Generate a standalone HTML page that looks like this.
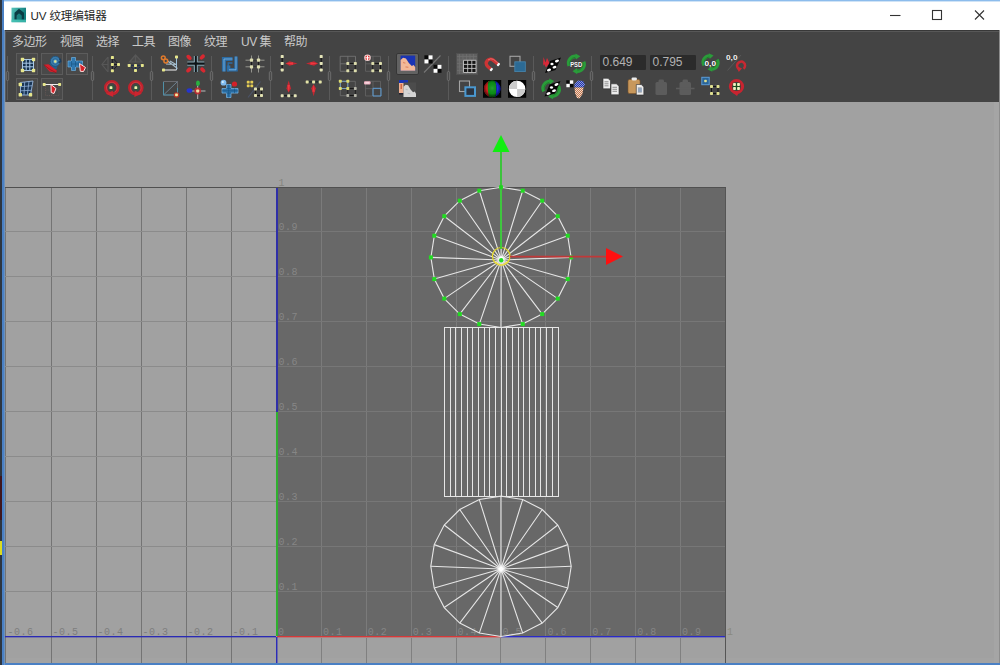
<!DOCTYPE html>
<html lang="zh-CN"><head><meta charset="utf-8"><title>UV 纹理编辑器</title>
<style>
html,body{margin:0;padding:0;}
body{width:1000px;height:665px;overflow:hidden;position:relative;background:#2e3640;font-family:"Liberation Sans","Noto Sans CJK SC",sans-serif;}
#frame{position:absolute;left:2px;top:0;width:998px;height:665px;background:#4a80c4;}
#lb{position:absolute;left:4px;top:0;width:1px;height:665px;background:#6e92bc;}
#title{position:absolute;left:4px;top:0;width:996px;height:30px;background:#fff;border-top:1px solid #8cbcec;box-sizing:border-box}
#title:before{content:"";position:absolute;left:0;top:0;width:100%;height:1px;background:#cfe3f6}
#title .t{position:absolute;left:26.5px;top:7px;font-size:11.6px;line-height:16px;color:#262626;white-space:nowrap;letter-spacing:-0.15px}
#tool{position:absolute;left:5px;top:30px;width:994px;height:72px;background:#444444;border-top:1px solid #383838;box-sizing:border-box}
#tool:before{content:"";position:absolute;left:0;top:0;width:100%;height:1px;background:#575757}
#tool:after{content:"";position:absolute;left:0;top:0;width:1px;height:100%;background:#5c5c5c}
#menu{position:absolute;left:0;top:0;height:22px;font-size:12px;color:#cacaca;white-space:nowrap;letter-spacing:-0.5px}
#menu span{position:absolute;top:2.5px;line-height:16px}
.num{position:absolute;top:55px;height:15px;width:46px;background:#2b2b2b;color:#b2b2b2;font-size:12px;line-height:15px;text-indent:2.5px;border-radius:1px}
.ls{position:absolute;left:0;width:3px}
</style></head><body>
<div class="ls" style="top:476px;height:44px;background:#40161c"></div>
<div class="ls" style="top:541px;height:14px;background:#dcdc20;width:3px"></div>
<div id="frame"></div><div id="lb"></div>
<div id="title">
<svg width="16" height="16" viewBox="0 0 16 16" style="position:absolute;left:6.500px;top:5.800px">
<defs><linearGradient id="lg" x1="0" y1="0" x2="1" y2=".3"><stop offset="0" stop-color="#56c4ba"/><stop offset="1" stop-color="#0f7c7c"/></linearGradient></defs>
<rect x=".5" y=".7" width="14.500" height="14.500" fill="url(#lg)"/>
<path d="M3.500 12.500 V5.800 L8 1.800 L13 5.800 V12.500 H10.500 V8.500 L8 6.500 L5.800 8.500 V12.500 Z" fill="#0a3c44"/>
<path d="M8 6.500 L10.500 8.500 V12.500 H5.800 V8.500Z" fill="#157878" opacity=".8"/>
<rect x=".5" y="12.700" width="14.500" height="2.500" fill="#48c8b8" opacity=".7"/>
</svg>
<div class="t">UV 纹理编辑器</div>
<svg width="120" height="28" viewBox="0 0 120 28" style="position:absolute;left:876px;top:0px">
<g stroke="#333" stroke-width="1.1" fill="none">
<line x1="10" y1="14.5" x2="20.5" y2="14.5"/>
<rect x="52.5" y="9.5" width="9" height="9"/>
<path d="M95 9.5 L104 18.5 M104 9.5 L95 18.5"/>
</g></svg>
</div>
<div id="tool">
<div id="menu">
<span style="left:7px">多边形</span><span style="left:55px">视图</span><span style="left:91px">选择</span><span style="left:127px">工具</span><span style="left:163px">图像</span><span style="left:199px">纹理</span><span style="left:236px">UV 集</span><span style="left:279px">帮助</span>
</div>
</div>
<div class="num" style="left:600px">0.649</div>
<div class="num" style="left:650px">0.795</div>
<svg id="cv" width="1000" height="665" viewBox="0 0 1000 665" style="position:absolute;left:0;top:0">
<rect x="5" y="102" width="994" height="561" fill="#a1a1a1"/>
<rect x="994" y="102" width="5" height="561" fill="#a5a5a5"/>
<rect x="5" y="658" width="994" height="5" fill="#a5a5a5" opacity=".6"/>
<rect x="999" y="30" width="1" height="633" fill="#8c8c8c"/>
<rect x="277" y="188" width="448" height="448" fill="#686868"/>
<g shape-rendering="crispEdges" stroke-width="1">
<line x1="5.5" y1="188" x2="5.5" y2="663" stroke="#747474"/>
<line x1="51.5" y1="188" x2="51.5" y2="663" stroke="#747474"/>
<line x1="96.5" y1="188" x2="96.5" y2="663" stroke="#747474"/>
<line x1="141.5" y1="188" x2="141.5" y2="663" stroke="#747474"/>
<line x1="186.5" y1="188" x2="186.5" y2="663" stroke="#747474"/>
<line x1="231.5" y1="188" x2="231.5" y2="663" stroke="#747474"/>
<line x1="321.5" y1="188" x2="321.5" y2="636" stroke="#7b7b7b"/>
<line x1="321.5" y1="638" x2="321.5" y2="663" stroke="#808080"/>
<line x1="366.5" y1="188" x2="366.5" y2="636" stroke="#7b7b7b"/>
<line x1="366.5" y1="638" x2="366.5" y2="663" stroke="#808080"/>
<line x1="411.5" y1="188" x2="411.5" y2="636" stroke="#7b7b7b"/>
<line x1="411.5" y1="638" x2="411.5" y2="663" stroke="#808080"/>
<line x1="456.5" y1="188" x2="456.5" y2="636" stroke="#7b7b7b"/>
<line x1="456.5" y1="638" x2="456.5" y2="663" stroke="#808080"/>
<line x1="500.5" y1="188" x2="500.5" y2="636" stroke="#7b7b7b"/>
<line x1="500.5" y1="638" x2="500.5" y2="663" stroke="#808080"/>
<line x1="545.5" y1="188" x2="545.5" y2="636" stroke="#7b7b7b"/>
<line x1="545.5" y1="638" x2="545.5" y2="663" stroke="#808080"/>
<line x1="590.5" y1="188" x2="590.5" y2="636" stroke="#7b7b7b"/>
<line x1="590.5" y1="638" x2="590.5" y2="663" stroke="#808080"/>
<line x1="635.5" y1="188" x2="635.5" y2="636" stroke="#7b7b7b"/>
<line x1="635.5" y1="638" x2="635.5" y2="663" stroke="#808080"/>
<line x1="680.5" y1="188" x2="680.5" y2="636" stroke="#7b7b7b"/>
<line x1="680.5" y1="638" x2="680.5" y2="663" stroke="#808080"/>
<line x1="725.5" y1="188" x2="725.5" y2="663" stroke="#555555"/>
<line x1="5" y1="591.5" x2="276" y2="591.5" stroke="#8b8b8b"/>
<line x1="278" y1="591.5" x2="725" y2="591.5" stroke="#777777"/>
<line x1="5" y1="546.5" x2="276" y2="546.5" stroke="#8b8b8b"/>
<line x1="278" y1="546.5" x2="725" y2="546.5" stroke="#777777"/>
<line x1="5" y1="501.5" x2="276" y2="501.5" stroke="#8b8b8b"/>
<line x1="278" y1="501.5" x2="725" y2="501.5" stroke="#777777"/>
<line x1="5" y1="456.5" x2="276" y2="456.5" stroke="#8b8b8b"/>
<line x1="278" y1="456.5" x2="725" y2="456.5" stroke="#777777"/>
<line x1="5" y1="411.5" x2="276" y2="411.5" stroke="#8b8b8b"/>
<line x1="278" y1="411.5" x2="725" y2="411.5" stroke="#777777"/>
<line x1="5" y1="366.5" x2="276" y2="366.5" stroke="#8b8b8b"/>
<line x1="278" y1="366.5" x2="725" y2="366.5" stroke="#777777"/>
<line x1="5" y1="321.5" x2="276" y2="321.5" stroke="#8b8b8b"/>
<line x1="278" y1="321.5" x2="725" y2="321.5" stroke="#777777"/>
<line x1="5" y1="276.5" x2="276" y2="276.5" stroke="#8b8b8b"/>
<line x1="278" y1="276.5" x2="725" y2="276.5" stroke="#777777"/>
<line x1="5" y1="231.5" x2="276" y2="231.5" stroke="#8b8b8b"/>
<line x1="278" y1="231.5" x2="725" y2="231.5" stroke="#777777"/>
<line x1="5" y1="187.5" x2="726" y2="187.5" stroke="#505050"/>
</g>
<g shape-rendering="crispEdges">
<rect x="5" y="636" width="271" height="1" fill="#2a2ab4"/><rect x="5" y="637" width="271" height="1" fill="#2a2ab4" opacity=".35"/>
<rect x="277" y="636" width="224" height="1" fill="#d83838"/><rect x="277" y="637" width="224" height="1" fill="#d83838" opacity=".35"/>
<rect x="501" y="636" width="224" height="1" fill="#2a2ac8"/><rect x="501" y="637" width="224" height="1" fill="#2a2ac8" opacity=".35"/>
<rect x="276" y="188" width="2" height="224" fill="#3030a8"/>
<rect x="276" y="412" width="2" height="224" fill="#2fb02f"/>
<rect x="276" y="637" width="1" height="26" fill="#2c2cb8"/><rect x="277" y="637" width="1" height="26" fill="#2c2cb8" opacity=".45"/>
</g>
<g font-family="'Liberation Mono', monospace" font-size="10" letter-spacing="0.5">
<text x="7.5" y="635" fill="#7e7e7e">-0.6</text>
<text x="52.5" y="635" fill="#7e7e7e">-0.5</text>
<text x="97.5" y="635" fill="#7e7e7e">-0.4</text>
<text x="142.5" y="635" fill="#7e7e7e">-0.3</text>
<text x="187.5" y="635" fill="#7e7e7e">-0.2</text>
<text x="232.5" y="635" fill="#7e7e7e">-0.1</text>
<text x="278.0" y="635" fill="#858585">0</text>
<text x="322.9" y="635" fill="#858585">0.1</text>
<text x="367.8" y="635" fill="#858585">0.2</text>
<text x="412.7" y="635" fill="#858585">0.3</text>
<text x="457.6" y="635" fill="#858585">0.4</text>
<text x="502.5" y="635" fill="#858585">0.5</text>
<text x="547.4" y="635" fill="#858585">0.6</text>
<text x="592.3" y="635" fill="#858585">0.7</text>
<text x="637.2" y="635" fill="#858585">0.8</text>
<text x="682.1" y="635" fill="#858585">0.9</text>
<text x="727.0" y="635" fill="#8a8a80">1</text>
<text x="278.5" y="590.0" fill="#868686">0.1</text>
<text x="278.5" y="545.1" fill="#868686">0.2</text>
<text x="278.5" y="500.1" fill="#868686">0.3</text>
<text x="278.5" y="455.2" fill="#868686">0.4</text>
<text x="278.5" y="410.2" fill="#868686">0.5</text>
<text x="278.5" y="365.3" fill="#868686">0.6</text>
<text x="278.5" y="320.3" fill="#868686">0.7</text>
<text x="278.5" y="275.4" fill="#868686">0.8</text>
<text x="278.5" y="230.4" fill="#868686">0.9</text>
<text x="278.5" y="185.5" fill="#858580">1</text>
</g>
<g shape-rendering="crispEdges" stroke="#e6e6e6" stroke-width="1">
<line x1="444.5" y1="327" x2="444.5" y2="496"/>
<line x1="450.5" y1="327" x2="450.5" y2="496"/>
<line x1="455.5" y1="327" x2="455.5" y2="496"/>
<line x1="461.5" y1="327" x2="461.5" y2="496"/>
<line x1="467.5" y1="327" x2="467.5" y2="496"/>
<line x1="472.5" y1="327" x2="472.5" y2="496"/>
<line x1="478.5" y1="327" x2="478.5" y2="496"/>
<line x1="484.5" y1="327" x2="484.5" y2="496"/>
<line x1="489.5" y1="327" x2="489.5" y2="496"/>
<line x1="495.5" y1="327" x2="495.5" y2="496"/>
<line x1="501.5" y1="327" x2="501.5" y2="496"/>
<line x1="506.5" y1="327" x2="506.5" y2="496"/>
<line x1="512.5" y1="327" x2="512.5" y2="496"/>
<line x1="518.5" y1="327" x2="518.5" y2="496"/>
<line x1="523.5" y1="327" x2="523.5" y2="496"/>
<line x1="529.5" y1="327" x2="529.5" y2="496"/>
<line x1="535.5" y1="327" x2="535.5" y2="496"/>
<line x1="540.5" y1="327" x2="540.5" y2="496"/>
<line x1="546.5" y1="327" x2="546.5" y2="496"/>
<line x1="552.5" y1="327" x2="552.5" y2="496"/>
<line x1="558.5" y1="327" x2="558.5" y2="496"/>
<line x1="444.0" y1="327.5" x2="558.5" y2="327.5"/>
<line x1="444.0" y1="496.5" x2="558.5" y2="496.5"/>
</g>
<path d="M571.20 566.30 L567.76 544.61 L557.79 525.04 L542.26 509.51 L522.69 499.54 L501.00 496.10 L479.31 499.54 L459.74 509.51 L444.21 525.04 L434.24 544.61 L430.80 566.30 L434.24 587.99 L444.21 607.56 L459.74 623.09 L479.31 633.06 L501.00 636.50 L522.69 633.06 L542.26 623.09 L557.79 607.56 L567.76 587.99 Z" fill="none" stroke="#e6e6e6" stroke-width="1.1"/>
<path d="M501 569 L571.20 566.30 M501 569 L567.76 544.61 M501 569 L557.79 525.04 M501 569 L542.26 509.51 M501 569 L522.69 499.54 M501 569 L501.00 496.10 M501 569 L479.31 499.54 M501 569 L459.74 509.51 M501 569 L444.21 525.04 M501 569 L434.24 544.61 M501 569 L430.80 566.30 M501 569 L434.24 587.99 M501 569 L444.21 607.56 M501 569 L459.74 623.09 M501 569 L479.31 633.06 M501 569 L501.00 636.50 M501 569 L522.69 633.06 M501 569 L542.26 623.09 M501 569 L557.79 607.56 M501 569 L567.76 587.99 " fill="none" stroke="#e6e6e6" stroke-width="1.1"/>
<rect x="498.8" y="566.8" width="4.4" height="4.4" transform="rotate(45 501 569)" fill="#ffffff"/>
<path d="M571.10 257.40 L567.67 235.74 L557.71 216.20 L542.20 200.69 L522.66 190.73 L501.00 187.30 L479.34 190.73 L459.80 200.69 L444.29 216.20 L434.33 235.74 L430.90 257.40 L434.33 279.06 L444.29 298.60 L459.80 314.11 L479.34 324.07 L501.00 327.50 L522.66 324.07 L542.20 314.11 L557.71 298.60 L567.67 279.06 Z" fill="none" stroke="#e6e6e6" stroke-width="1.1"/>
<path d="M501.2 260 L571.10 257.40 M501.2 260 L567.67 235.74 M501.2 260 L557.71 216.20 M501.2 260 L542.20 200.69 M501.2 260 L522.66 190.73 M501.2 260 L501.00 187.30 M501.2 260 L479.34 190.73 M501.2 260 L459.80 200.69 M501.2 260 L444.29 216.20 M501.2 260 L434.33 235.74 M501.2 260 L430.90 257.40 M501.2 260 L434.33 279.06 M501.2 260 L444.29 298.60 M501.2 260 L459.80 314.11 M501.2 260 L479.34 324.07 M501.2 260 L501.00 327.50 M501.2 260 L522.66 324.07 M501.2 260 L542.20 314.11 M501.2 260 L557.71 298.60 M501.2 260 L567.67 279.06 " fill="none" stroke="#e6e6e6" stroke-width="1.1"/>
<rect x="569.1" y="255.4" width="4" height="4" fill="#22dd22"/>
<rect x="565.7" y="233.7" width="4" height="4" fill="#22dd22"/>
<rect x="555.7" y="214.2" width="4" height="4" fill="#22dd22"/>
<rect x="540.2" y="198.7" width="4" height="4" fill="#22dd22"/>
<rect x="520.7" y="188.7" width="4" height="4" fill="#22dd22"/>
<rect x="499.0" y="185.3" width="4" height="4" fill="#22dd22"/>
<rect x="477.3" y="188.7" width="4" height="4" fill="#22dd22"/>
<rect x="457.8" y="198.7" width="4" height="4" fill="#22dd22"/>
<rect x="442.3" y="214.2" width="4" height="4" fill="#22dd22"/>
<rect x="432.3" y="233.7" width="4" height="4" fill="#22dd22"/>
<rect x="428.9" y="255.4" width="4" height="4" fill="#22dd22"/>
<rect x="432.3" y="277.1" width="4" height="4" fill="#22dd22"/>
<rect x="442.3" y="296.6" width="4" height="4" fill="#22dd22"/>
<rect x="457.8" y="312.1" width="4" height="4" fill="#22dd22"/>
<rect x="477.3" y="322.1" width="4" height="4" fill="#22dd22"/>
<rect x="520.7" y="322.1" width="4" height="4" fill="#22dd22"/>
<rect x="540.2" y="312.1" width="4" height="4" fill="#22dd22"/>
<rect x="555.7" y="296.6" width="4" height="4" fill="#22dd22"/>
<rect x="565.7" y="277.1" width="4" height="4" fill="#22dd22"/>
<circle cx="501.2" cy="256.3" r="8.800" fill="none" stroke="#e8dc28" stroke-width="1.200"/>
<line x1="501" y1="249" x2="501" y2="152" stroke="#22cc22" stroke-width="1.600"/>
<polygon points="501,135 492.5,152 509.5,152" fill="#11ee11"/>
<line x1="510" y1="256.700" x2="607" y2="256.700" stroke="#c03838" stroke-width="1.700"/>
<polygon points="623,256.5 606,248 606,265" fill="#ff1010"/>
<circle cx="501.200" cy="259" r="2.600" fill="#ffffff"/><circle cx="501.200" cy="260.200" r="2.200" fill="#22dd22"/><path d="M495.500 262 Q501 268 507 262" stroke="#f0e050" stroke-width="1.500" fill="none" opacity=".8"/>
</svg>
<svg id="ic" width="1000" height="110" viewBox="0 0 1000 110" style="position:absolute;left:0;top:0">
<defs>
<radialGradient id="rgS" cx=".5" cy=".45" r=".55"><stop offset="0" stop-color="#fff" stop-opacity=".12"/><stop offset=".6" stop-color="#000" stop-opacity=".05"/><stop offset="1" stop-color="#000" stop-opacity=".7"/></radialGradient>
</defs>
<line x1="7.5" y1="56" x2="7.5" y2="100" stroke="#5a5a5a" stroke-width="1"/>
<rect x="6.3" y="71.5" width="2.4" height="9" rx="1.2" fill="#4a4a4a" stroke="#7c7c7c" stroke-width=".7"/>
<line x1="92.5" y1="56" x2="92.5" y2="100" stroke="#5a5a5a" stroke-width="1"/>
<rect x="91.3" y="71.5" width="2.4" height="9" rx="1.2" fill="#4a4a4a" stroke="#7c7c7c" stroke-width=".7"/>
<line x1="151.5" y1="56" x2="151.5" y2="100" stroke="#5a5a5a" stroke-width="1"/>
<rect x="150.3" y="71.5" width="2.4" height="9" rx="1.2" fill="#4a4a4a" stroke="#7c7c7c" stroke-width=".7"/>
<line x1="211.5" y1="56" x2="211.5" y2="100" stroke="#5a5a5a" stroke-width="1"/>
<rect x="210.3" y="71.5" width="2.4" height="9" rx="1.2" fill="#4a4a4a" stroke="#7c7c7c" stroke-width=".7"/>
<line x1="270.5" y1="56" x2="270.5" y2="100" stroke="#5a5a5a" stroke-width="1"/>
<rect x="269.3" y="71.5" width="2.4" height="9" rx="1.2" fill="#4a4a4a" stroke="#7c7c7c" stroke-width=".7"/>
<line x1="329.5" y1="56" x2="329.5" y2="100" stroke="#5a5a5a" stroke-width="1"/>
<rect x="328.3" y="71.5" width="2.4" height="9" rx="1.2" fill="#4a4a4a" stroke="#7c7c7c" stroke-width=".7"/>
<line x1="388.5" y1="56" x2="388.5" y2="100" stroke="#5a5a5a" stroke-width="1"/>
<rect x="387.3" y="71.5" width="2.4" height="9" rx="1.2" fill="#4a4a4a" stroke="#7c7c7c" stroke-width=".7"/>
<line x1="448.5" y1="56" x2="448.5" y2="100" stroke="#5a5a5a" stroke-width="1"/>
<rect x="447.3" y="71.5" width="2.4" height="9" rx="1.2" fill="#4a4a4a" stroke="#7c7c7c" stroke-width=".7"/>
<line x1="533.5" y1="56" x2="533.5" y2="100" stroke="#5a5a5a" stroke-width="1"/>
<rect x="532.3" y="71.5" width="2.4" height="9" rx="1.2" fill="#4a4a4a" stroke="#7c7c7c" stroke-width=".7"/>
<line x1="591.5" y1="56" x2="591.5" y2="100" stroke="#5a5a5a" stroke-width="1"/>
<rect x="590.3" y="71.5" width="2.4" height="9" rx="1.2" fill="#4a4a4a" stroke="#7c7c7c" stroke-width=".7"/>
<rect x="16.5" y="53.5" width="21" height="21" fill="#494949" stroke="#5c5c5c" stroke-width="1"/>
<rect x="41.5" y="53.5" width="21" height="21" fill="#494949" stroke="#5c5c5c" stroke-width="1"/>
<rect x="66.5" y="53.5" width="21" height="21" fill="#494949" stroke="#5c5c5c" stroke-width="1"/>
<rect x="16.5" y="78.5" width="21" height="21" fill="#494949" stroke="#5c5c5c" stroke-width="1"/>
<rect x="41.5" y="78.5" width="21" height="21" fill="#494949" stroke="#5c5c5c" stroke-width="1"/>
<rect x="22" y="59" width="12" height="12" fill="#14304c"/>
<path d="M22.5 59.5H33.5V70.5H22.5Z M26.2 59.5V70.5 M29.8 59.5V70.5 M22.5 63.2H33.5 M22.5 66.8H33.5" stroke="#a8c8e6" stroke-width="1" fill="none"/>
<rect x="20.8" y="57.8" width="3.4" height="3.4" rx=".7" fill="#e6e68c"/>
<rect x="31.8" y="57.8" width="3.4" height="3.4" rx=".7" fill="#e6e68c"/>
<rect x="20.8" y="68.8" width="3.4" height="3.4" rx=".7" fill="#e6e68c"/>
<rect x="31.8" y="68.8" width="3.4" height="3.4" rx=".7" fill="#e6e68c"/>
<path d="M49.500 63.500 L52 60 L58 64 L56.500 69.500 L53 69 Z" fill="#2a5f8c"/>
<circle cx="55.300" cy="61.300" r="5" fill="#3a7cac" stroke="#1f527c" stroke-width=".8"/>
<path d="M59.500 58.500 A5 5 0 0 1 60.800 61.500 L58.500 62.500" fill="none" stroke="#1c3c5c" stroke-width="1.400"/>
<circle cx="55.300" cy="61.500" r="2.700" fill="#4c94c4" stroke="#1c4c74" stroke-width=".6"/>
<rect x="54.1" y="60.3" width="2.4" height="2.4" rx=".7" fill="#e6e68c"/>
<path d="M43.700 64.700 L48.500 64.200 L56.800 70.500 L56.300 72.800 L49.500 71.500 Z" fill="#d4202c"/>
<path d="M43.700 64.700 L50 69.500 L56.300 72.800" stroke="#7c1018" stroke-width=".6" fill="none"/>
<path d="M71 57.5h4v3.5h7v6h-7v3.5h-4v-3.5h-3.5v-6h3.5z" transform="translate(0.5,0)" fill="#2f78b0" stroke="#6fb0e0" stroke-width=".7"/>
<path d="M71.5 61v6 M75.5 61v6 M79 61v6 M71.5 64h11" stroke="#14507e" stroke-width=".6" fill="none"/>
<path d="M79.5 63.5 L85.5 67.5 L83.5 71.5 L80.3 71.3 Z" fill="#d42028" stroke="#ffe0e0" stroke-width="1"/>
<path d="M20.5 82.5 L33 81 L30.5 95 L20.5 95 Z" fill="#1a3656" stroke="#9ab8dc" stroke-width=".9"/>
<path d="M24.7 82 L24 95 M29 81.5 L27.3 95 M20.5 86.7 L32.2 85.7 M20.5 90.8 L31.4 90.3" stroke="#8fb0d8" stroke-width=".8" fill="none"/>
<rect x="18.6" y="82.8" width="3.4" height="3.4" rx=".7" fill="#e6e68c"/>
<rect x="18.6" y="93.0" width="3.4" height="3.4" rx=".7" fill="#e6e68c"/>
<rect x="28.8" y="93.0" width="3.4" height="3.4" rx=".7" fill="#e6e68c"/>
<path d="M45.5 85 H59 V95.5 H45.5 Z M45.5 90 H59 M52 85 V95.5" stroke="#6a5a58" stroke-width=".7" fill="none" stroke-dasharray="1.2 1"/>
<line x1="44" y1="84.5" x2="60" y2="84.5" stroke="#f0f0f0" stroke-width="1"/>
<rect x="42.7" y="83.0" width="3.0" height="3.0" rx=".7" fill="#e6e68c"/>
<rect x="58.1" y="83.0" width="3.0" height="3.0" rx=".7" fill="#e6e68c"/>
<path d="M51 84.5 L56 88.5 L54 93.5 L51.2 92.5 Z" fill="#d42028" stroke="#ffe4e4" stroke-width="1"/>
<path d="M108 57 L102 64.5 L108 72 M108 57 V72 M102 64.5 H108" stroke="#686868" stroke-width="1.2" fill="none" opacity=".55"/>
<path d="M112.4 57.6 V70.8 M112.4 64.5 H118.5 M112.4 57.6 L118.5 64.5 L112.4 70.8" stroke="#1c1c24" stroke-width="1" fill="none"/>
<rect x="110.9" y="56.1" width="3.0" height="3.0" rx=".7" fill="#e6e68c"/>
<rect x="110.9" y="63.0" width="3.0" height="3.0" rx=".7" fill="#e6e68c"/>
<rect x="110.9" y="69.3" width="3.0" height="3.0" rx=".7" fill="#e6e68c"/>
<rect x="117.0" y="63.0" width="3.0" height="3.0" rx=".7" fill="#e6e68c"/>
<path d="M129.5 62 L135.5 55 L142 62 Z M135.500 55 V62" stroke="#646464" stroke-width="1.2" fill="#4e4e4e" opacity=".6"/>
<path d="M129.2 65.4 H142.3 M135.5 65.4 V70.5 M129.2 65.4 L135.5 70.5 L142.3 65.4" stroke="#1c2c50" stroke-width="1" fill="none"/>
<rect x="127.7" y="63.9" width="3.0" height="3.0" rx=".7" fill="#e6e68c"/>
<rect x="134.0" y="63.9" width="3.0" height="3.0" rx=".7" fill="#e6e68c"/>
<rect x="140.8" y="63.9" width="3.0" height="3.0" rx=".7" fill="#e6e68c"/>
<rect x="134.0" y="69.0" width="3.0" height="3.0" rx=".7" fill="#e6e68c"/>
<g transform="translate(111.8,87.7)"><circle cx="0" cy="0" r="6.200" fill="none" stroke="#c0222c" stroke-width="3.200"/><path d="M-6 6 L1 3 L1.500 9.300 Z" fill="#cc2530"/><path d="M-4.500 3 A5.400 5.400 0 1 1 3 4.500" fill="none" stroke="#e85860" stroke-width=".7" opacity=".6"/></g>
<rect x="109.2" y="85.5" width="4.4" height="4.4" fill="#2c5c38"/>
<rect x="109.6" y="86.3" width="2.8" height="2.8" rx=".7" fill="#f0f0b0"/>
<g transform="translate(135.8,87.7) scale(-1,1)"><circle cx="0" cy="0" r="6.200" fill="none" stroke="#c0222c" stroke-width="3.200"/><path d="M-6 6 L1 3 L1.500 9.300 Z" fill="#cc2530"/><path d="M-4.500 3 A5.400 5.400 0 1 1 3 4.500" fill="none" stroke="#e85860" stroke-width=".7" opacity=".6"/></g>
<rect x="134.0" y="85.5" width="4.4" height="4.4" fill="#2c5c38"/>
<rect x="134.4" y="86.3" width="2.8" height="2.8" rx=".7" fill="#f0f0b0"/>
<path d="M176.5 57 V70" stroke="#9cc0dc" stroke-width="1" fill="none"/>
<path d="M163.5 70 H176.5" stroke="#e8e8e8" stroke-width="1.1" fill="none"/>
<path d="M167 60.5 L177.5 68.5 M166 64 L176 64.500 L170 61" stroke="#a8c0d0" stroke-width="1.1" fill="none"/>
<circle cx="163.3" cy="57.8" r="1.9" fill="none" stroke="#e07a2c" stroke-width="1.5"/><circle cx="165.800" cy="61" r="1.9" fill="none" stroke="#e07a2c" stroke-width="1.5"/>
<rect x="175.0" y="55.5" width="3.0" height="3.0" rx=".7" fill="#e6e68c"/>
<rect x="162.0" y="68.5" width="3.0" height="3.0" rx=".7" fill="#e6e68c"/>
<path d="M194.3 56v6h-7 M197.3 56v6h7 M194.3 72v-6.800h-7 M197.3 72v-6.800h7" stroke="#86aab8" stroke-width="1" fill="none"/>
<path d="M195.8 56V72 M187.500 63.600H204.5" stroke="#0c1418" stroke-width="1.6" fill="none"/>
<ellipse cx="189" cy="57.3" rx="3" ry="1.9" transform="rotate(45 189 57.3)" fill="#d82830"/>
<ellipse cx="202.3" cy="57" rx="3" ry="1.9" transform="rotate(135 202.3 57)" fill="#d82830"/>
<ellipse cx="188.8" cy="69.8" rx="3" ry="1.9" transform="rotate(-45 188.8 69.8)" fill="#d82830"/>
<ellipse cx="202.8" cy="70" rx="3" ry="1.9" transform="rotate(-135 202.8 70)" fill="#d82830"/>
<path d="M163.5 81.5 H177.5 V95 H163.5 Z" stroke="#6a6a70" stroke-width="1" fill="none"/>
<path d="M163.5 95 L177.5 81.5" stroke="#6c8090" stroke-width="1" fill="none"/>
<path d="M163.5 82 V95 H177 M177.500 88 V95" stroke="#4f90a8" stroke-width="1" fill="none"/>
<circle cx="176.5" cy="95" r="2.800" fill="#c83020" opacity=".85"/>
<rect x="175.1" y="93.4" width="2.8" height="2.8" rx=".7" fill="#f4e8a0"/>
<path d="M197.7 85 V99 M190 91 H205.5" stroke="#c8c8c8" stroke-width=".9"/>
<circle cx="197.7" cy="91" r="3.4" fill="#c02830" opacity=".9"/>
<ellipse cx="198" cy="83.300" rx="1.900" ry="2.800" fill="#28b040"/>
<ellipse cx="189.5" cy="90.5" rx="2.900" ry="2.300" fill="#2434d0"/>
<rect x="196.2" y="89.5" width="3.0" height="3.0" rx=".7" fill="#f0e0a0"/>
<path d="M224 71.5 V59 H232.500" stroke="#2c6ca4" stroke-width="4.2" fill="none"/>
<path d="M236 56.500 V69.800 H228.600 V65.5" stroke="#2c6ca4" stroke-width="3.600" fill="none"/>
<path d="M224 71.5 V59 H232.500 M236 56.500 V69.800 H228.600 V65.5" stroke="#86bce8" stroke-width=".8" fill="none"/>
<path d="M228.200 71.500 V63 H232.500" stroke="#2c6ca4" stroke-width="1.4" fill="none"/>
<path d="M251.5 55.5V72.5 M258.5 55.5V72.5 M245.500 60.2H264.500 M245.500 66.8H264.500" stroke="#b4b4ac" stroke-width=".9" opacity=".8"/>
<path d="M251.5 60.2H258.5V66.8H251.5Z" stroke="#181818" stroke-width="1" fill="none"/>
<rect x="249.9" y="58.6" width="3.2" height="3.2" rx=".7" fill="#dcdcb0"/>
<rect x="256.9" y="58.6" width="3.2" height="3.2" rx=".7" fill="#dcdcb0"/>
<rect x="249.9" y="65.2" width="3.2" height="3.2" rx=".7" fill="#dcdcb0"/>
<rect x="256.9" y="65.2" width="3.2" height="3.2" rx=".7" fill="#dcdcb0"/>
<path d="M226.500 84.500h4.500v4h7v4.600h-7v4.400h-4.500v-4.400h-4.500v-4.600h4.500z" fill="#2f74ac" stroke="#7ab8e6" stroke-width=".7"/>
<path d="M222 90.800h16 M228.700 84.500v13 M226.500 88.500h4.500 M226.500 93.100h4.500 M234.500 88.500v4.600" stroke="#16507e" stroke-width=".6" fill="none"/>
<circle cx="223.5" cy="82.700" r="2.900" fill="#80bcf0"/><circle cx="222.8" cy="82" r="1.1" fill="#dcf2ff"/>
<circle cx="234.5" cy="84" r="2.600" fill="#d42028"/>
<rect x="246.8" y="80.8" width="2.8" height="2.8" rx=".7" fill="#e4cc54"/>
<rect x="250.4" y="80.8" width="2.8" height="2.8" rx=".7" fill="#e4cc54"/>
<rect x="246.8" y="84.4" width="2.8" height="2.8" rx=".7" fill="#e4cc54"/>
<rect x="250.4" y="84.4" width="2.8" height="2.8" rx=".7" fill="#e4cc54"/>
<line x1="248" y1="97.5" x2="260.500" y2="81.500" stroke="#4c5468" stroke-width="1.1"/>
<path d="M255.5 89H261.500V95.500H255.5Z" stroke="#141414" stroke-width="1" fill="none"/>
<rect x="254.0" y="87.5" width="3.0" height="3.0" rx=".7" fill="#e0e0b0"/>
<rect x="260.0" y="87.5" width="3.0" height="3.0" rx=".7" fill="#e0e0b0"/>
<rect x="254.0" y="94.0" width="3.0" height="3.0" rx=".7" fill="#e0e0b0"/>
<rect x="260.0" y="94.0" width="3.0" height="3.0" rx=".7" fill="#e0e0b0"/>
<line x1="282.2" y1="56.600" x2="282.2" y2="70" stroke="#101010" stroke-width="1.1"/>
<rect x="280.7" y="55.1" width="3.0" height="3.0" rx=".7" fill="#e4e4b8"/>
<rect x="280.7" y="61.9" width="3.0" height="3.0" rx=".7" fill="#e4e4b8"/>
<rect x="280.7" y="68.5" width="3.0" height="3.0" rx=".7" fill="#e4e4b8"/>
<g transform="translate(290,63.5) rotate(180)"><path d="M-7.500 0 L0.500 -2.300 L4.500 0 L0.500 2.300 Z" fill="#c42832"/><path d="M-3 -1.200 L4.500 0 L-3 1.200 Z" fill="#ec3840"/></g>
<line x1="321.2" y1="56.600" x2="321.2" y2="70" stroke="#101010" stroke-width="1.1"/>
<rect x="319.7" y="55.1" width="3.0" height="3.0" rx=".7" fill="#e4e4b8"/>
<rect x="319.7" y="61.9" width="3.0" height="3.0" rx=".7" fill="#e4e4b8"/>
<rect x="319.7" y="68.5" width="3.0" height="3.0" rx=".7" fill="#e4e4b8"/>
<g transform="translate(313.5,63.5) rotate(0)"><path d="M-7.500 0 L0.500 -2.300 L4.500 0 L0.500 2.300 Z" fill="#c42832"/><path d="M-3 -1.200 L4.500 0 L-3 1.200 Z" fill="#ec3840"/></g>
<line x1="282.2" y1="95.7" x2="295.2" y2="95.7" stroke="#181c1c" stroke-width="1.1"/>
<rect x="280.7" y="94.2" width="3.0" height="3.0" rx=".7" fill="#e4e4b8"/>
<rect x="287.2" y="94.2" width="3.0" height="3.0" rx=".7" fill="#e4e4b8"/>
<rect x="293.7" y="94.2" width="3.0" height="3.0" rx=".7" fill="#e4e4b8"/>
<g transform="translate(288.7,88) rotate(90)"><path d="M-7.500 0 L0.500 -2.300 L4.500 0 L0.500 2.300 Z" fill="#c42832"/><path d="M-3 -1.200 L4.500 0 L-3 1.200 Z" fill="#ec3840"/></g>
<line x1="307.2" y1="81.9" x2="320.2" y2="81.9" stroke="#102828" stroke-width="1.1"/>
<rect x="305.7" y="80.4" width="3.0" height="3.0" rx=".7" fill="#e4e4a8"/>
<rect x="312.1" y="80.4" width="3.0" height="3.0" rx=".7" fill="#e4e4a8"/>
<rect x="318.7" y="80.4" width="3.0" height="3.0" rx=".7" fill="#e4e4a8"/>
<g transform="translate(313.6,88.8) rotate(-90)"><path d="M-7.500 0 L0.500 -2.300 L4.500 0 L0.500 2.300 Z" fill="#c42832"/><path d="M-3 -1.200 L4.500 0 L-3 1.200 Z" fill="#ec3840"/></g>
<path d="M340.2 56.3H355.5V71.3H340.2Z M347.84999999999997 56.3V71.3 M340.2 63.8H355.5" stroke="#787878" stroke-width=".8" fill="none"/>
<path d="M347.800 63.500H355.300V70.800H347.800Z" stroke="#141414" stroke-width="1" fill="none"/>
<rect x="346.3" y="62.0" width="3.0" height="3.0" rx=".7" fill="#dcdcac"/>
<rect x="353.8" y="62.0" width="3.0" height="3.0" rx=".7" fill="#dcdcac"/>
<rect x="346.3" y="69.3" width="3.0" height="3.0" rx=".7" fill="#dcdcac"/>
<rect x="353.8" y="69.3" width="3.0" height="3.0" rx=".7" fill="#dcdcac"/>
<path d="M365.5 56.3H380.5V71.3H365.5Z M373.0 56.3V71.3 M365.5 63.8H380.5" stroke="#646464" stroke-width=".8" fill="none"/>
<path d="M372.800 63.500H380.500V70.800H372.800Z" stroke="#141414" stroke-width="1" fill="none"/>
<rect x="371.3" y="62.0" width="3.0" height="3.0" rx=".7" fill="#dcdcac"/>
<rect x="379.0" y="62.0" width="3.0" height="3.0" rx=".7" fill="#dcdcac"/>
<rect x="371.3" y="69.3" width="3.0" height="3.0" rx=".7" fill="#dcdcac"/>
<rect x="379.0" y="69.3" width="3.0" height="3.0" rx=".7" fill="#dcdcac"/>
<circle cx="367.5" cy="57.8" r="3.300" fill="#f4d0d0"/><circle cx="367.5" cy="57.8" r="2.300" fill="#e03434"/><path d="M365.3 57.800h4.400M367.5 55.6v4.400" stroke="#fff" stroke-width="1"/>
<path d="M340.3 81.3H355.3V95.7H340.3Z M347.8 81.3V95.7 M340.3 88.5H355.3" stroke="#6e6e6e" stroke-width=".8" fill="none"/>
<path d="M340.3 81.300H347.800V88.500H340.3Z" stroke="#78a8c8" stroke-width=".9" fill="none"/>
<path d="M347.8 88.500H355.300V95.500H347.800Z" stroke="#161616" stroke-width="1" fill="none"/>
<rect x="338.8" y="79.8" width="3.0" height="3.0" rx=".7" fill="#dcdc70"/>
<rect x="346.3" y="79.8" width="3.0" height="3.0" rx=".7" fill="#dcdc70"/>
<rect x="338.8" y="87.0" width="3.0" height="3.0" rx=".7" fill="#dcdc70"/>
<rect x="346.3" y="87.0" width="3.0" height="3.0" rx=".7" fill="#dcdc70"/>
<rect x="353.9" y="87.1" width="2.8" height="2.8" rx=".7" fill="#b4b4a8"/>
<rect x="346.4" y="94.1" width="2.8" height="2.8" rx=".7" fill="#b4b4a8"/>
<rect x="353.9" y="94.1" width="2.8" height="2.8" rx=".7" fill="#b4b4a8"/>
<path d="M365.5 81.3H380.5V96.0H365.5Z M373.0 81.3V96.0 M365.5 88.64999999999999H380.5" stroke="#646464" stroke-width=".8" fill="none"/>
<path d="M373 88.300H381V96H373Z" stroke="#5c9cd4" stroke-width="1" fill="none"/>
<rect x="364" y="81.300" width="6.600" height="3.200" rx="1" fill="#f0b0c0"/><line x1="365.3" y1="82.900" x2="369.3" y2="82.900" stroke="#fff" stroke-width=".8"/>
<rect x="396.5" y="53.5" width="22" height="21" rx="1.5" fill="#626262" stroke="#363636" stroke-width="1"/>
<g transform="translate(400.6,55.6) scale(0.9733333333333333,0.9806451612903225)"><rect width="15" height="15.5" fill="#1a34b4"/><path d="M0 4.500 L2.500 2.300 L5.500 3 L8.500 7.500 L11.500 10.500 L13.500 9.500 L15 12 V15.500 H0 Z" fill="#f2b898"/><path d="M2.500 7 l2.500 .8 M5 11.500 l3 .5" stroke="#e08c68" stroke-width="1.300" fill="none"/></g>
<line x1="424" y1="72.500" x2="440.500" y2="55.500" stroke="#767676" stroke-width="1.1"/>
<rect x="424.4" y="55.3" width="8.2" height="8.2" fill="#080808"/><rect x="428.5" y="55.3" width="4.1" height="4.1" fill="#fff"/><rect x="424.4" y="59.4" width="4.1" height="4.1" fill="#fff"/>
<rect x="433.5" y="64.8" width="8" height="8" fill="#080808"/><rect x="437.5" y="64.8" width="4" height="4" fill="#fff"/><rect x="433.5" y="68.8" width="4" height="4" fill="#fff"/>
<rect x="399" y="80" width="5" height="13.500" fill="#f0b090"/><rect x="399" y="80" width="9" height="3" fill="#1a34b4"/><rect x="400.500" y="84" width="1.500" height="5" fill="#d06848"/><rect x="399" y="93" width="5" height="1.500" fill="#223"/>
<g transform="translate(403.5,82.5) scale(0.8333333333333334,0.9354838709677419)"><rect width="15" height="15.5" fill="#4c4c4c"/><path d="M0 4.500 L2.500 2.300 L5.500 3 L8.500 7.500 L11.500 10.500 L13.500 9.500 L15 12 V15.500 H0 Z" fill="#d4d4d4"/><path d="M2.500 7 l2.500 .8 M5 11.500 l3 .5" stroke="#b8bcc0" stroke-width="1.300" fill="none"/></g>
<rect x="456" y="53" width="22" height="22" fill="#606060"/>
<path d="M456 56.500H478 M456 60H478 M456 63.500H478 M456 67H478 M456 70.500H478 M459.5 53V75 M463 53V75 M466.500 53V75 M470 53V75 M473.500 53V75" stroke="#6e6e6e" stroke-width=".8"/>
<rect x="456.500" y="53.500" width="21" height="21" fill="none" stroke="#505050" stroke-width="1"/>
<rect x="463.500" y="60.300" width="12.500" height="12.200" fill="#141414"/>
<path d="M463.5 60.300H476V72.500H463.5Z M467.700 60.300V72.500 M471.800 60.300V72.500 M463.5 64.400H476 M463.5 68.400H476" stroke="#c4c4c4" stroke-width=".9" fill="none"/>
<g transform="translate(490.45,63.300) rotate(40)"><path d="M6 -4.200 L0 -4.200 A4.200 4.200 0 0 0 0 4.200 L3.800 4.200" stroke="#cc3434" stroke-width="3.400" fill="none"/><path d="M6 -5 L0 -5 A5 5 0 0 0 -4 -1" stroke="#f07070" stroke-width=".8" fill="none"/><rect x="5.800" y="-5.900" width="2.200" height="3.400" rx=".8" fill="#f8f8f8"/><rect x="3.600" y="2.500" width="2.200" height="3.400" rx=".8" fill="#f8f8f8"/></g>
<rect x="510" y="56.300" width="10" height="10" fill="none" stroke="#a4a4a4" stroke-width="1.1"/>
<rect x="514.800" y="61.800" width="10.500" height="9.800" fill="#2c6a94" stroke="#4886ae" stroke-width=".8"/>
<rect x="459.500" y="81" width="10" height="10.500" fill="none" stroke="#a4a4a4" stroke-width="1.1"/>
<rect x="465.400" y="87.300" width="9.600" height="8.600" fill="#2c3440" stroke="#4a98d0" stroke-width="2"/>
<rect x="483" y="80" width="18.200" height="17.800" fill="#040404"/>
<clipPath id="cpS"><ellipse cx="492.200" cy="88.900" rx="8.300" ry="8.300"/></clipPath>
<g clip-path="url(#cpS)"><rect x="483" y="80" width="6" height="19" fill="#e42020"/><path d="M488.500 80 Q486.500 89 489.500 98 H495 Q498 89 495 80 Z" fill="#0c9418"/><path d="M495 80 Q498 89 495 98 H502 V80 Z" fill="#1c2cf0"/><circle cx="492.200" cy="88.900" r="8.300" fill="url(#rgS)"/></g>
<rect x="508" y="80" width="18.200" height="17.800" fill="#040404"/>
<circle cx="517.100" cy="88.900" r="8.200" fill="#ffffff"/>
<path d="M517.100 88.900 V80.700 A8.200 8.200 0 0 0 508.900 88.900 Z M517.100 88.900 V97.100 A8.200 8.200 0 0 0 525.300 88.900 Z" fill="#cccccc"/>
<g transform="translate(545,61)"><path d="M5 0 L16 -3.500 L10.500 9 L0 12 Z" fill="#060606"/><ellipse cx="12" cy="0" rx="2.100" ry="1.300" transform="rotate(-20 12 0)" fill="#fff"/><ellipse cx="7" cy="3" rx="1.600" ry="1.200" fill="#fff"/><ellipse cx="9.500" cy="6.200" rx="2" ry="1.300" transform="rotate(-15 9.500 6.200)" fill="#fff"/><ellipse cx="4" cy="9" rx="2.100" ry="1.300" transform="rotate(-15 4 9)" fill="#fff"/></g>
<path d="M543.500 57 L545.500 62.500 L547 58 L549.500 63 L546 67.500 L544 64 L543 66 Z" fill="#d82838"/>
<g transform="translate(575.8,63.3) rotate(-5)"><path d="M-6.8 2 A6.8 6.8 0 0 1 1 -6.8" fill="none" stroke="#2a9c3a" stroke-width="3.6"/><path d="M0.500 -9.9 L5.1 -6.6 L0.500 -3.7 Z" fill="#2a9c3a"/><path d="M-6.0 1 A6.0 6.0 0 0 1 0 -6.0" fill="none" stroke="#1c7c28" stroke-width=".8"/></g>
<g transform="translate(577,64.3) rotate(175)"><path d="M-6.8 2 A6.8 6.8 0 0 1 1 -6.8" fill="none" stroke="#2a9c3a" stroke-width="3.6"/><path d="M0.500 -9.9 L5.1 -6.6 L0.500 -3.7 Z" fill="#2a9c3a"/><path d="M-6.0 1 A6.0 6.0 0 0 1 0 -6.0" fill="none" stroke="#1c7c28" stroke-width=".8"/></g>
<text x="570.200" y="66.800" font-family="'Liberation Sans',sans-serif" font-weight="bold" font-size="7.800" fill="#f8f8f8" stroke="#181818" stroke-width=".4" paint-order="stroke" textLength="12" lengthAdjust="spacingAndGlyphs">PSD</text>
<g transform="translate(550.3,88.3) rotate(-10)"><path d="M-6.8 2 A6.8 6.8 0 0 1 1 -6.8" fill="none" stroke="#2a9c3a" stroke-width="3.6"/><path d="M0.500 -9.9 L5.1 -6.6 L0.500 -3.7 Z" fill="#2a9c3a"/><path d="M-6.0 1 A6.0 6.0 0 0 1 0 -6.0" fill="none" stroke="#1c7c28" stroke-width=".8"/></g>
<g transform="translate(552,89.3) rotate(170)"><path d="M-6.8 2 A6.8 6.8 0 0 1 1 -6.8" fill="none" stroke="#2a9c3a" stroke-width="3.6"/><path d="M0.500 -9.9 L5.1 -6.6 L0.500 -3.7 Z" fill="#2a9c3a"/><path d="M-6.0 1 A6.0 6.0 0 0 1 0 -6.0" fill="none" stroke="#1c7c28" stroke-width=".8"/></g>
<g transform="translate(544.5,84.5)"><path d="M5 0 L16 -3.500 L10.500 9 L0 12 Z" fill="#060606"/><ellipse cx="12" cy="0" rx="2.100" ry="1.300" transform="rotate(-20 12 0)" fill="#fff"/><ellipse cx="7" cy="3" rx="1.600" ry="1.200" fill="#fff"/><ellipse cx="9.500" cy="6.200" rx="2" ry="1.300" transform="rotate(-15 9.500 6.200)" fill="#fff"/><ellipse cx="4" cy="9" rx="2.100" ry="1.300" transform="rotate(-15 4 9)" fill="#fff"/></g>
<rect x="566.3" y="80.3" width="7.0" height="7.0" fill="#080808"/><rect x="569.8" y="80.3" width="3.5" height="3.5" fill="#fff"/><rect x="566.3" y="83.8" width="3.5" height="3.5" fill="#fff"/>
<defs><pattern id="dith" width="2" height="2" patternUnits="userSpaceOnUse"><rect width="2" height="2" fill="#2434a8"/><rect width="1" height="1" fill="#8c9ce0"/><rect x="1" y="1" width="1" height="1" fill="#8c9ce0"/></pattern><pattern id="dith2" width="2" height="2" patternUnits="userSpaceOnUse"><rect width="2" height="2" fill="#c07850"/><rect width="1" height="1" fill="#f4d8c8"/><rect x="1" y="1" width="1" height="1" fill="#f4d8c8"/></pattern></defs>
<path d="M574.500 84 L578 80.500 L583 81 L585 84.500 L583.500 87.500 L574.500 87.500 Z" fill="url(#dith)"/>
<path d="M574.500 87.500 L583.500 87.500 L582.500 94 L579.500 98.500 L577 98 L575 93 Z" fill="url(#dith2)"/>
<path d="M603 78.3h5.0l2.500 2.500v8.0h-7.5z" fill="#ececec" stroke="#2c2c2c" stroke-width=".6"/><path d="M604.5 81.8h4.0M604.5 83.8h4.0M604.5 85.8h4.0" stroke="#666" stroke-width=".7"/>
<path d="M611 83.8h5.5l2.500 2.500v8.5h-8z" fill="#ececec" stroke="#2c2c2c" stroke-width=".6"/><path d="M612.5 87.3h4.5M612.5 89.3h4.5M612.5 91.3h4.5" stroke="#666" stroke-width=".7"/>
<rect x="628" y="79.500" width="12" height="14" rx="1.500" fill="#c8985c" stroke="#7c5428" stroke-width=".6"/><rect x="631.500" y="77.500" width="5.500" height="3" rx="1.400" fill="#ececec"/>
<path d="M636.3 84.5h5.0l2.500 2.500v8.0h-7.5z" fill="#ececec" stroke="#2c2c2c" stroke-width=".6"/><path d="M637.8 88.0h4.0M637.8 90.0h4.0M637.8 92.0h4.0" stroke="#666" stroke-width=".7"/>
<path d="M638 89h4M638 91h4" stroke="#4878b8" stroke-width=".7"/>
<rect x="655.500" y="82" width="11.500" height="13" rx="1.500" fill="#5c5c5c"/><rect x="658.500" y="79.500" width="5.500" height="3.500" rx="1.400" fill="#5c5c5c"/>
<rect x="679.500" y="82" width="11.500" height="13" rx="1.500" fill="#5c5c5c"/><rect x="682.500" y="79.500" width="5.500" height="3.500" rx="1.400" fill="#5c5c5c"/><path d="M676 88.500h18.500" stroke="#5c5c5c" stroke-width="1.600"/>
<g transform="translate(709.8,62.3) rotate(-10)"><path d="M-6.2 2 A6.2 6.2 0 0 1 1 -6.2" fill="none" stroke="#2a9c3a" stroke-width="3.4"/><path d="M0.500 -9.200000000000001 L4.9 -6.0 L0.500 -3.2 Z" fill="#2a9c3a"/><path d="M-5.4 1 A5.4 5.4 0 0 1 0 -5.4" fill="none" stroke="#1c7c28" stroke-width=".8"/></g>
<g transform="translate(711.3,62.7) rotate(170)"><path d="M-6.2 2 A6.2 6.2 0 0 1 1 -6.2" fill="none" stroke="#2a9c3a" stroke-width="3.4"/><path d="M0.500 -9.200000000000001 L4.9 -6.0 L0.500 -3.2 Z" fill="#2a9c3a"/><path d="M-5.4 1 A5.4 5.4 0 0 1 0 -5.4" fill="none" stroke="#1c7c28" stroke-width=".8"/></g>
<text x="704.500" y="65.500" font-family="'Liberation Sans',sans-serif" font-size="7.800" fill="#ffffff" stroke="#141414" stroke-width=".35" paint-order="stroke" font-weight="bold" textLength="11.500" lengthAdjust="spacingAndGlyphs">0,0</text>
<line x1="727.500" y1="70.500" x2="741" y2="55" stroke="#585858" stroke-width="1"/>
<text x="726" y="59.500" font-family="'Liberation Sans',sans-serif" font-size="7.800" fill="#f4f4f4" stroke="#1c1c1c" stroke-width=".3" paint-order="stroke" font-weight="bold" textLength="11.500" lengthAdjust="spacingAndGlyphs">0,0</text>
<path d="M739.500 69.300 A4 4 0 1 1 743.500 68.800" fill="none" stroke="#c82832" stroke-width="2.500"/><path d="M736.500 66.500 L742 68.300 L738.800 72 Z" fill="#c82832"/>
<line x1="708" y1="84" x2="712" y2="88" stroke="#3c3c50" stroke-width="1"/><line x1="709" y1="95" x2="716" y2="84" stroke="#4c4c58" stroke-width=".8"/>
<rect x="701.800" y="77.300" width="7.400" height="7.400" fill="#2a6498" stroke="#5c9cd8" stroke-width="1"/>
<rect x="704.2" y="79.7" width="2.6" height="2.6" rx=".7" fill="#e0e090"/>
<path d="M711.500 86.500H718V93.500H711.500Z" stroke="#141414" stroke-width="1" fill="none"/>
<rect x="710.0" y="85.0" width="3.0" height="3.0" rx=".7" fill="#e0e090"/>
<rect x="716.5" y="85.0" width="3.0" height="3.0" rx=".7" fill="#e0e090"/>
<rect x="710.0" y="92.0" width="3.0" height="3.0" rx=".7" fill="#e0e090"/>
<rect x="716.5" y="92.0" width="3.0" height="3.0" rx=".7" fill="#e0e090"/>
<circle cx="736.500" cy="86.500" r="6" fill="none" stroke="#c82430" stroke-width="3.200"/><path d="M732.500 92.500 L739.500 91.500 L737 96 Z" fill="#c82430"/>
<rect x="732.800" y="82.800" width="7.400" height="7.400" fill="#1c4c20"/>
<rect x="733.1" y="83.1" width="2.8" height="2.8" rx=".7" fill="#f0f0c0"/>
<rect x="737.1" y="83.1" width="2.8" height="2.8" rx=".7" fill="#f0f0c0"/>
<rect x="733.1" y="87.1" width="2.8" height="2.8" rx=".7" fill="#f0f0c0"/>
<rect x="737.1" y="87.1" width="2.8" height="2.8" rx=".7" fill="#f0f0c0"/>
</svg>
</body></html>
